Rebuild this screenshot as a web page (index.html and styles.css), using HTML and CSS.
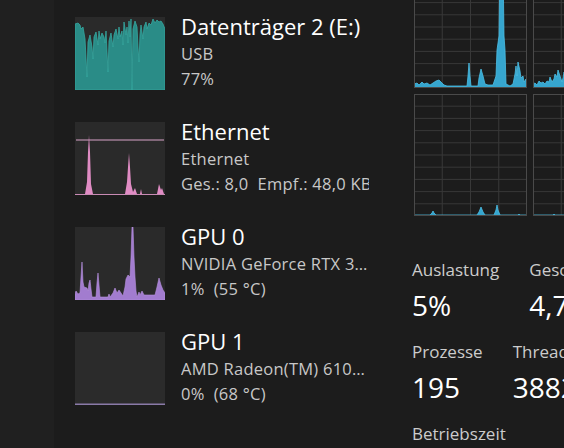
FILE: index.html
```html
<!DOCTYPE html>
<html lang="de">
<head>
<meta charset="utf-8">
<title>Task-Manager – Leistung</title>
<link rel="stylesheet" href="styles.css">
</head>
<body>
<nav class="rail"></nav>

<section class="list">
  <div class="item">
    <svg class="thumb disk" viewBox="0 0 90 73" preserveAspectRatio="none">
      <rect x="0" y="0" width="90" height="73" fill="#2a2a2a"/>
      <polygon fill="#2a8c87" stroke="#35a79f" stroke-width="0.8" points="0,7 3,6 5,8 6,12 8,10 10,22 12,60 13,25 15,18 17,30 18,42 19,20 21,15 23,28 24,14 25,22 27,16 29,20 30,26 31,14 33,55 34,24 36,16 38,30 39,18 41,12 43,22 44,10 45,20 47,14 48,28 49,5 51,18 52,10 53,26 54,4 55,20 56,2 57,73 58,12 60,4 62,10 63,30 64,45 65,18 66,8 68,22 69,10 71,5 72,12 74,6 76,8 78,2 80,6 82,3 84,5 86,4 88,7 90,12 90,73 0,73"/>
    </svg>
    <div class="info">
      <div class="title">Datenträger 2 (E:)</div>
      <div class="sub">USB</div>
      <div class="sub">77%</div>
    </div>
  </div>

  <div class="item">
    <svg class="thumb eth" viewBox="0 0 90 73" preserveAspectRatio="none">
      <rect x="0" y="0" width="90" height="73" fill="#2a2a2a"/>
      <line x1="1" y1="18" x2="89" y2="18" stroke="#d8a3c8" stroke-width="1"/>
      <polygon fill="#e08cc4" points="0,72 10,72 12,60 13,30 14,13 15,30 16,62 18,72 50,72 52,60 53,45 54,31 55,45 56,62 58,70 60,66 62,72 65,72 66,67 67,72 82,72 84,62 86,68 87,66 89,72 90,72 90,73 0,73"/>
      <line x1="0" y1="72.5" x2="90" y2="72.5" stroke="#c98ab4" stroke-width="1"/>
    </svg>
    <div class="info">
      <div class="title">Ethernet</div>
      <div class="sub">Ethernet</div>
      <div class="sub">Ges.: 8,0&nbsp; Empf.: 48,0 KBit/s</div>
    </div>
  </div>

  <div class="item">
    <svg class="thumb gpu" viewBox="0 0 90 73" preserveAspectRatio="none">
      <rect x="0" y="0" width="90" height="73" fill="#2a2a2a"/>
      <polygon fill="#a27ccf" stroke="#b892e0" stroke-width="0.6" points="0,73 0,67 1,64 3,67 5,66 6,50 7,35 8,55 9,60 12,61 13,64 14,56 15,53 16,62 17,70 21,70 22,56 23,46 24,58 25,70 33,70 34,67 35,70 38,66 40,61 42,66 44,63 46,66 48,69 50,60 51,52 53,48 55,50 56,30 57,0 58,0 59,30 60,50 61,64 62,70 64,65 65,68 67,64 69,68 70,68 80,68 82,60 84,51 86,58 88,63 90,66 90,73"/>
    </svg>
    <div class="info">
      <div class="title">GPU 0</div>
      <div class="sub ellip">NVIDIA GeForce RTX 3050 Laptop GPU</div>
      <div class="sub">1%&nbsp; (55 °C)</div>
    </div>
  </div>

  <div class="item">
    <svg class="thumb gpu1" viewBox="0 0 90 73" preserveAspectRatio="none">
      <rect x="0" y="0" width="90" height="73" fill="#2b2b2b"/>
      <line x1="0" y1="72.3" x2="90" y2="72.3" stroke="#8a7aa8" stroke-width="1.4"/>
    </svg>
    <div class="info">
      <div class="title">GPU 1</div>
      <div class="sub ellip">AMD Radeon(TM) 610M Graphics</div>
      <div class="sub">0%&nbsp; (68 °C)</div>
    </div>
  </div>
</section>

<main class="main">
  <div class="graphs">
    <svg class="cell" viewBox="0 0 113 122" preserveAspectRatio="none">
      <use href="#grid"/>
      <polygon class="load" points="0,122 0,118 3,117 5,119 8,116 10,118 13,117 16,119 19,117 22,115 25,114 27,116 30,119 33,120 53,120 54,110 55,97 56,110 57,120 64,120 65,112 67,103 69,110 71,118 74,119 79,119 82,110 83,84 85,70 86,-2 89,-2 90,70 91,84 92,118 96,120 99,118 101,108 102,100 103,110 104,96 106,105 107,112 109,110 110,116 112,113 113,118 113,122"/>
    </svg>
    <svg class="cell" viewBox="0 0 113 122" preserveAspectRatio="none">
      <use href="#grid"/>
      <polygon class="load" points="0,122 0,118 2,117 4,119 6,115 8,117 10,116 12,118 14,115 16,116 17,111 19,116 21,113 22,108 24,111 25,104 27,110 29,116 30,112 31,106 33,112 34,120 36,121 113,121 113,122"/>
    </svg>
    <svg class="cell" viewBox="0 0 113 122" preserveAspectRatio="none">
      <use href="#grid"/>
    </svg>
    <svg class="cell" viewBox="0 0 113 122" preserveAspectRatio="none">
      <use href="#grid"/>
      <polygon class="load" points="0,122 0,121 16,121 18,119 19,117 20,119 22,121 63,121 65,118 67,113 69,118 71,121 80,121 82,116 83,111 84,116 86,121 104,121 105,120 106,121 113,121 113,122"/>
    </svg>
    <svg class="cell" viewBox="0 0 113 122" preserveAspectRatio="none">
      <use href="#grid"/>
      <polygon class="load" points="0,122 0,121 20,121 21,120 22,121 113,121 113,122"/>
    </svg>
    <svg class="cell" viewBox="0 0 113 122" preserveAspectRatio="none">
      <use href="#grid"/>
    </svg>
  </div>

  <svg class="defs" width="0" height="0">
    <defs>
      <g id="grid">
        <rect x="0" y="0" width="113" height="122" fill="#1c1c1c"/>
        <g stroke="#383838" stroke-width="1">
          <line x1="0" y1="12.2" x2="113" y2="12.2"/>
          <line x1="0" y1="24.4" x2="113" y2="24.4"/>
          <line x1="0" y1="36.6" x2="113" y2="36.6"/>
          <line x1="0" y1="48.8" x2="113" y2="48.8"/>
          <line x1="0" y1="61" x2="113" y2="61"/>
          <line x1="0" y1="73.2" x2="113" y2="73.2"/>
          <line x1="0" y1="85.4" x2="113" y2="85.4"/>
          <line x1="0" y1="97.6" x2="113" y2="97.6"/>
          <line x1="0" y1="109.8" x2="113" y2="109.8"/>
          <line x1="28.25" y1="0" x2="28.25" y2="122"/>
          <line x1="56.5" y1="0" x2="56.5" y2="122"/>
          <line x1="84.75" y1="0" x2="84.75" y2="122"/>
        </g>
      </g>
    </defs>
  </svg>

  <div class="stats">
    <div class="row">
      <div class="stat"><div class="label">Auslastung</div><div class="value">5%</div></div>
      <div class="stat"><div class="label">Geschwindigkeit</div><div class="value">4,79 GHz</div></div>
    </div>
    <div class="row">
      <div class="stat"><div class="label">Prozesse</div><div class="value">195</div></div>
      <div class="stat"><div class="label">Threads</div><div class="value">3882</div></div>
    </div>
    <div class="row">
      <div class="stat"><div class="label">Betriebszeit</div><div class="value">0:02:14:37</div></div>
    </div>
  </div>
</main>
</body>
</html>
```

FILE: styles.css
```css
* { box-sizing: border-box; }

html, body {
  margin: 0;
  width: 564px;
  height: 448px;
  overflow: hidden;
}

body {
  display: flex;
  background: #1c1c1c;
  color: #ffffff;
  font-family: "Open Sans", "Noto Sans", sans-serif;
}

.rail {
  flex: none;
  width: 54px;
  background: #202020;
}

.list {
  flex: none;
  width: 346px;
  padding: 17px 0 0 21px;
  display: flex;
  flex-direction: column;
  gap: 32px;
}

.item {
  display: flex;
  gap: 16px;
  height: 73px;
}

.thumb {
  flex: none;
  width: 90px;
  height: 73px;
  display: block;
}

.info {
  width: 188px;
  overflow: hidden;
  white-space: nowrap;
}

.title {
  font-size: 22px;
  line-height: 29px;
  margin-top: -5px;
  color: #ffffff;
}

.sub {
  font-size: 16.5px;
  line-height: 25px;
  letter-spacing: 0.25px;
  color: #c8c8c8;
  overflow: hidden;
}

.ellip {
  text-overflow: ellipsis;
}

.main {
  flex: 1;
  min-width: 0;
  padding-left: 12px;
  overflow: hidden;
}

.graphs {
  display: grid;
  grid-template-columns: 113px 113px 113px;
  grid-auto-rows: 122px;
  gap: 6px;
  margin: -34px 0 0 2px;
  width: 360px;
}

.cell {
  display: block;
  width: 113px;
  height: 122px;
  outline: 1px solid #4a4a4a;
  outline-offset: -1px;
}

.load {
  fill: #36a6cf;
  stroke: #4bbfe6;
  stroke-width: 0.8;
}

.defs {
  position: absolute;
  width: 0;
  height: 0;
}

.stats {
  margin-top: 43px;
  display: flex;
  flex-direction: column;
  gap: 16px;
  white-space: nowrap;
}

.row {
  display: flex;
  gap: 30px;
}

.label {
  font-size: 17px;
  line-height: 22px;
  color: #cccccc;
}

.value {
  margin-top: 4px;
  font-size: 28px;
  line-height: 40px;
  color: #ffffff;
}
```
